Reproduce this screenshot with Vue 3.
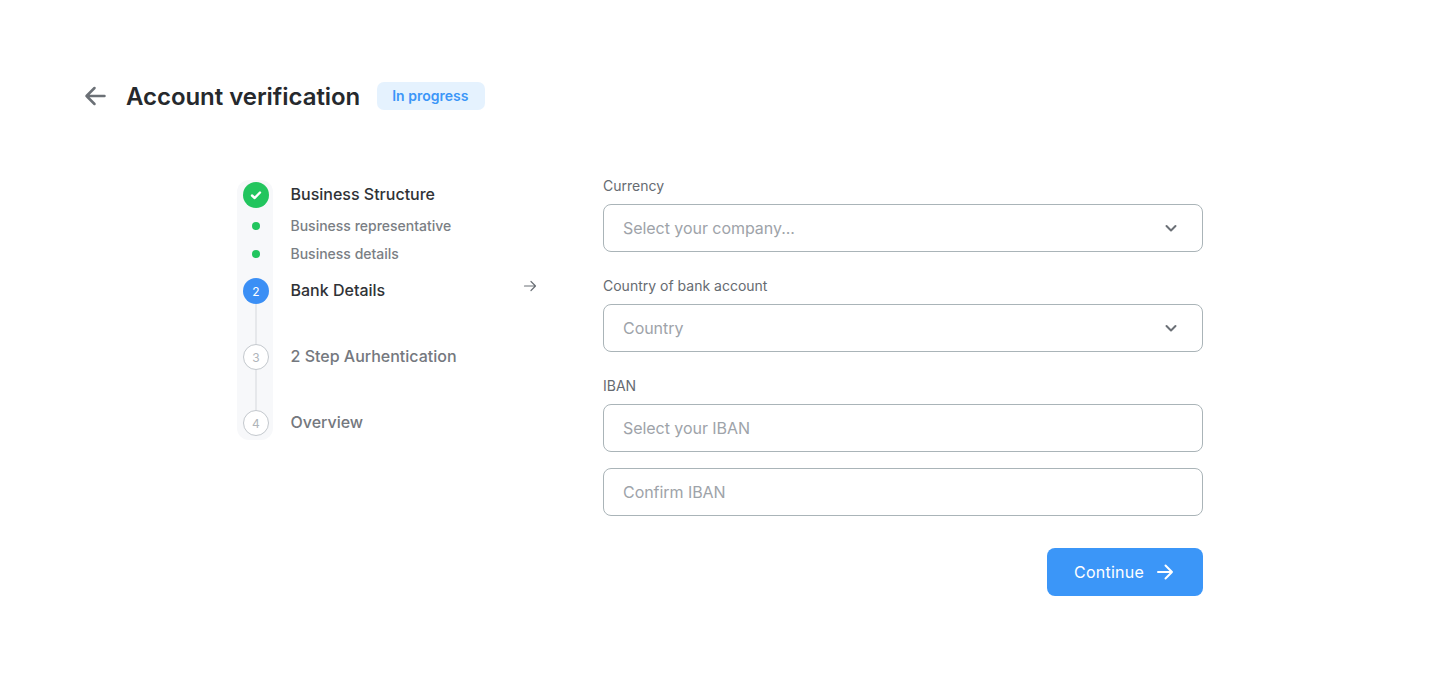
<script setup>
const fields = [
  { label: 'Currency', ph: 'Select your company...', select: true },
  { label: 'Country of bank account', ph: 'Country', select: true }
]
</script>

<template>
  <div class="page">
    <header class="head">
      <svg class="back" width="24" height="24" viewBox="0 0 24 24" fill="none" stroke="#6b7076" stroke-width="2.5" stroke-linecap="round" stroke-linejoin="round"><path d="M21.5 12H3.5M11.5 4l-8 8 8 8"/></svg>
      <h1>Account verification</h1>
      <span class="badge">In progress</span>
    </header>
    <main class="body">
      <div class="steps">
        <div class="rail"></div>
        <div class="step main">
          <span class="mark done"><svg width="14" height="14" viewBox="0 0 14 14" fill="none" stroke="#fff" stroke-width="2.4" stroke-linecap="round" stroke-linejoin="round"><path d="M3 7.5l2.7 2.5L11 4.5"/></svg></span>
          <span class="txt">Business Structure</span>
        </div>
        <div class="step sub first"><span class="mark"><i class="dot"></i></span><span class="txt">Business representative</span></div>
        <div class="step sub"><span class="mark"><i class="dot"></i></span><span class="txt">Business details</span></div>
        <div class="step main bank"><span class="mark active">2</span><span class="txt">Bank Details</span></div>
        <div class="gap"><span class="mark"><i class="line"></i></span></div>
        <div class="step main off"><span class="mark todo">3</span><span class="txt">2 Step Aurhentication</span></div>
        <div class="gap"><span class="mark"><i class="line"></i></span></div>
        <div class="step main off"><span class="mark todo">4</span><span class="txt">Overview</span></div>
      </div>
      <div class="pointer">
        <svg width="14" height="14" viewBox="0 0 14 14" fill="none" stroke="#6b7076" stroke-width="1.2" stroke-linecap="round" stroke-linejoin="round"><path d="M1.500 7h11M8 2.500L12.500 7 8 11.500"/></svg>
      </div>
      <form class="form" @submit.prevent>
        <div v-for="f in fields" :key="f.label" class="field">
          <label>{{ f.label }}</label>
          <div class="box">
            <span>{{ f.ph }}</span>
            <svg width="16" height="16" viewBox="0 0 16 16" fill="none" stroke="#6b7076" stroke-width="2" stroke-linecap="round" stroke-linejoin="round"><path d="M3.500 6l4.500 4.500L12.500 6"/></svg>
          </div>
        </div>
        <div class="field">
          <label>IBAN</label>
          <div class="box"><span>Select your IBAN</span></div>
          <div class="box second"><span>Confirm IBAN</span></div>
        </div>
        <div class="actions">
          <button class="btn" type="submit">
            Continue
            <svg width="18" height="18" viewBox="0 0 18 18" fill="none" stroke="#fff" stroke-width="2" stroke-linecap="round" stroke-linejoin="round"><path d="M2 9h14M9.500 2.500L16 9l-6.500 6.500"/></svg>
          </button>
        </div>
      </form>
    </main>
  </div>
</template>

<style>
html, body { margin: 0; background: #fff; }
</style>

<style scoped>
.page {
  width: 1440px;
  height: 676px;
  box-sizing: border-box;
  padding-top: 80px;
  font-family: Inter, "Liberation Sans", sans-serif;
  color: #26292d;
  overflow: hidden;
}
.head { display: flex; align-items: center; height: 32px; padding-left: 83px; }
.back { margin-right: 19px; }
h1 { margin: 2px 0 0; font-size: 24px; line-height: 32px; font-weight: 600; letter-spacing: -0.05px; color: #26292d; }
.badge {
  margin-left: 17px;
  height: 28px;
  width: 108px;
  box-sizing: border-box;
  padding: 0 2px 2px 0;
  display: flex;
  align-items: center;
  justify-content: center;
  border-radius: 7px;
  background: #e5f2fe;
  color: #3b96f8;
  font-size: 14px;
  font-weight: 600;
}
.body { display: flex; margin-top: 60px; padding-left: 237px; }
.steps { position: relative; width: 286px; padding-top: 10px; }
.rail { position: absolute; left: 0; top: 8px; width: 36px; height: 260px; border-radius: 12px; background: #f7f8fa; }
.step, .gap { position: relative; display: flex; align-items: center; }
.txt { padding-bottom: 2px; }
.mark { width: 36px; flex: none; display: flex; align-items: center; justify-content: center; margin: 0 16.500px 0 1px; }
.mark.done, .mark.active, .mark.todo { width: 26px; height: 26px; margin: 0 21.500px 0 6px; border-radius: 50%; font-size: 12px; font-weight: 400; }
.done { background: #22c55e; }
.active { background: #3b8ff5; color: #fff; }
.todo { box-sizing: border-box; background: #fff; border: 1px solid #c3c8cd; color: #b0b5ba; }
.main { height: 26px; font-size: 16px; font-weight: 500; color: #2f3236; }
.main.off { color: #74787e; }
.sub { height: 28px; font-size: 14px; font-weight: 500; color: #7a7e84; }
.first { margin-top: 4px; }
.bank { margin-top: 10px; }
.dot { display: block; width: 8px; height: 8px; border-radius: 50%; background: #22c55e; }
.gap { height: 40px; }
.gap .mark { height: 100%; }
.line { display: block; width: 2px; height: 100%; background: #e6e8eb; }
.pointer { width: 80px; padding-top: 105px; }
.form { width: 600px; padding-top: 4px; }
.field { display: flex; flex-direction: column; margin-bottom: 24px; }
label { font-size: 14px; line-height: 20px; color: #666b71; margin-bottom: 8px; }
.box {
  box-sizing: border-box;
  height: 48px;
  display: flex;
  align-items: center;
  justify-content: space-between;
  padding: 0 23px 0 19px;
  border: 1px solid #aab4b8;
  border-radius: 8px;
  font-size: 16px;
  letter-spacing: -0.05px;
  color: #9ea3a9;
}
.second { margin-top: 16px; }
.actions { display: flex; justify-content: flex-end; margin-top: 32px; }
.btn {
  width: 156px;
  height: 48px;
  box-sizing: border-box;
  padding: 0 0 0 27px;
  display: flex;
  align-items: center;
  justify-content: flex-start;
  gap: 12px;
  border: 0;
  border-radius: 8px;
  background: #3b96f8;
  color: #fff;
  font: 400 16px Inter, "Liberation Sans", sans-serif;
  letter-spacing: 0.25px;
}
</style>
